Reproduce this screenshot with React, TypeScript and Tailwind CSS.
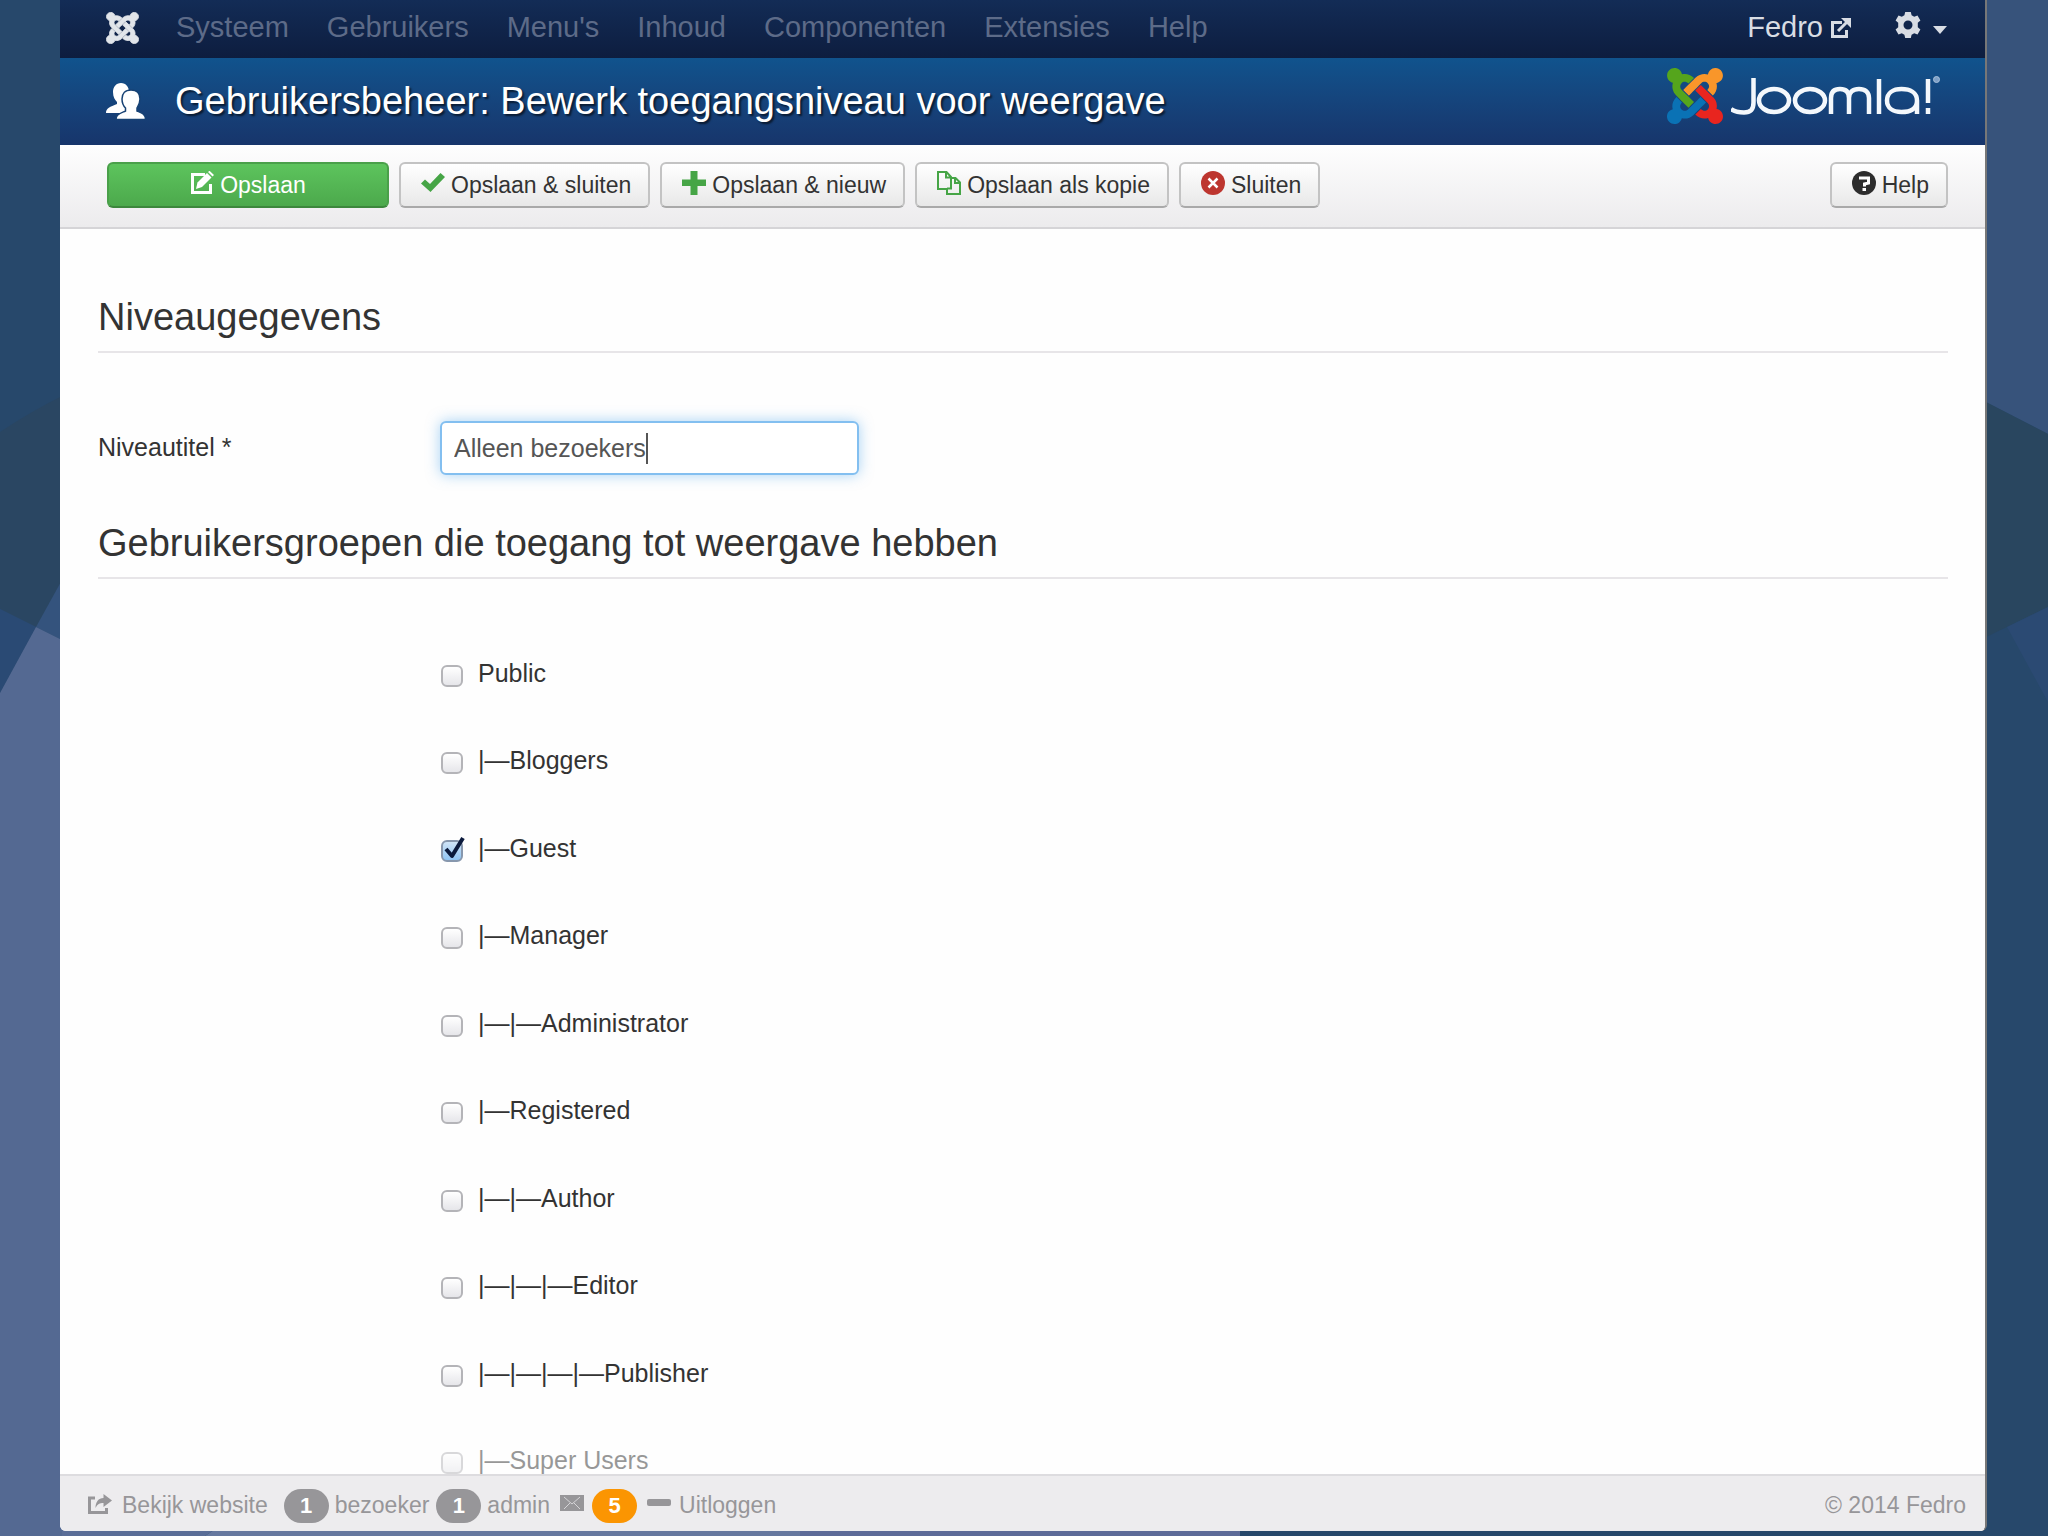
import { useId, useState } from 'react';
import type { ReactNode, SVGProps } from 'react';

type IconProps = SVGProps<SVGSVGElement>;

const knotArms = [
  'M.6 92.100C.6 58.800 27.400 32 60.400 32c30 0 54.500 21.900 59.200 50.200 32.600-7.600 67.100.6 96.500 30l-44.300 44.300c-20.500-20.500-42.600-16.300-55.400-3.500-14.300 14.300-14.300 37.900 0 52.200l99.500 99.500-44 44.300c-87.700-87.200-49.700-49.700-99.800-99.700-26.800-26.500-35-64.800-24.800-98.900C20.400 144.600.6 120.700.6 92.100z',
  'M130.100 208.500l44.300 44.300c10-10 89.700-89.700 99.700-99.800 14.300-14.300 37.600-14.300 51.900 0 12.800 12.800 17 35-3.500 55.400l44 44.300c31.200-31.200 38.500-67.600 28.900-101.200 29.200-4.100 51.900-29.200 51.900-59.500 0-33.200-26.800-60.100-59.800-60.100-30.300 0-55.400 22.500-59.500 51.600-33.800-9.900-71.700-1.500-98.300 25.100-18.300 19.100-71.100 71.500-99.600 99.900z',
  'M396.400 360.700c8.200-32.700-.9-68.500-26.300-93.900-11.800-12.200 5 4.700-99.500-99.700l-44.300 44.300 99.700 99.700c14.300 14.300 14.300 37.600 0 51.900-12.800 12.800-35 17-55.400-3.500l-44 44.300c27.600 30.200 68 38.800 102.700 28 5.500 27.400 29.700 48.100 58.900 48.100 33 0 59.800-26.800 59.800-60.100 0-30.200-22.500-55-51.600-59.100z',
  'M312.100 307.600l-44-44.300c-87 86.400-50.400 50.400-99.700 99.800-14.300 14.300-37.600 14.300-51.900 0-13.100-13.400-16.900-35.300 3.200-55.400l-44-44.300c-30.200 30.200-38 65.200-29.500 98.300-26.700 6-46.200 29.900-46.200 58.200C0 453.200 26.800 480 59.800 480c28.600 0 52.500-19.800 58.600-46.700 32.700 8.200 68.500-.6 94.200-26 32.100-32 12.200-12.400 99.500-99.700z',
];

function JoomlaMark(props: IconProps) {
  const colors = ['#55a51c', '#f9962a', '#e8251f', '#0a72b5'];
  return (
    <svg viewBox="0 32 448 448" preserveAspectRatio="none" aria-hidden="true" {...props}>
      {[3, 2, 1, 0].map((arm) => (
        <path key={arm} d={knotArms[arm]} fill={colors[arm]} />
      ))}
    </svg>
  );
}

function JoomlaGlyph(props: IconProps) {
  return (
    <svg viewBox="-6 26 460 460" preserveAspectRatio="none" fill="#e1e5ea" aria-hidden="true" {...props}>
      {knotArms.map((arm) => (
        <path key={arm} d={arm} stroke="#e1e5ea" strokeWidth="12" />
      ))}
    </svg>
  );
}

function UsersIcon(props: IconProps) {
  return (
    <svg viewBox="0 0 40 38" fill="#fff" aria-hidden="true" {...props}>
      <path d="M15 1c5 0 8 4 8 9 0 5-2 8-3 10v3l4 2v6H0c0-5 4-6 11-9v-2C9 18 7 15 7 10c0-5 3-9 8-9z" />
      <path
        stroke="#174274"
        strokeWidth="1.500"
        d="M25 8c6 0 9 4 9 9 0 4-2 7-3 9v3c5 2 8.500 3 8.500 8.500H10c0-5 4-6 9.500-8.500v-3c-2-2-3.500-5-3.500-9 0-5 3-9 9-9z"
      />
    </svg>
  );
}

function ExternalIcon(props: IconProps) {
  return (
    <svg viewBox="0 0 20 20" fill="none" stroke="currentColor" strokeWidth="3" aria-hidden="true" {...props}>
      <path d="M11 4.500H1.500v14h14V12M7 13L16 4" />
      <path d="M10 0H20v10z" fill="currentColor" stroke="none" />
    </svg>
  );
}

function GearIcon(props: IconProps) {
  return (
    <svg viewBox="0 0 26 26" fill="currentColor" aria-hidden="true" {...props}>
      <path
        fillRule="evenodd"
        d="M10.200 0h5.600l.8 3.300 2.600 1.500 3.300-1.300 2.900 5-2.600 2.300v4.400l2.600 2.300-2.900 5-3.300-1.300-2.600 1.500-.8 3.300h-5.600l-.8-3.300-2.600-1.500-3.300 1.300-2.900-5 2.600-2.300v-4.400L.6 8.500l2.900-5 3.300 1.300 2.600-1.500zM13 8.500a4.500 4.500 0 1 0 0 9 4.500 4.500 0 0 0 0-9z"
      />
    </svg>
  );
}

function EditIcon(props: IconProps) {
  return (
    <svg viewBox="0 0 24 24" fill="none" stroke="currentColor" aria-hidden="true" {...props}>
      <path d="M15 3.500H2.500v18h18V13" strokeWidth="3" />
      <path d="M6 18l1.500-6.500L17 2l4.500 4.500-9.500 9.500z" fill="currentColor" stroke="none" />
      <path d="M18 1l1.500-1.200L24 4l-1.500 1.500z" fill="currentColor" stroke="none" />
    </svg>
  );
}

function CheckIcon(props: IconProps) {
  return (
    <svg viewBox="0 0 24 20" fill="#46a546" aria-hidden="true" {...props}>
      <path d="M0 10.500L4 6.500l5 4.500L19.500 0 24 4 9.500 19z" />
    </svg>
  );
}

function PlusIcon(props: IconProps) {
  return (
    <svg viewBox="0 0 24 24" fill="#46a546" aria-hidden="true" {...props}>
      <path d="M8.500 0h7v8.500H24v6.500h-8.500V24h-7v-9H0V8.500h8.500z" />
    </svg>
  );
}

function CopyIcon(props: IconProps) {
  return (
    <svg viewBox="0 0 24 24" fill="none" stroke="#46a546" strokeWidth="2" aria-hidden="true" {...props}>
      <path d="M10 18H1V1h8.500L14 6v2M9 1v5.500h5" />
      <path d="M10 18v5h13V11.500L18.500 7H14v10.500h-4M18 7v5h5" />
    </svg>
  );
}

function CloseIcon(props: IconProps) {
  return (
    <svg viewBox="0 0 24 24" aria-hidden="true" {...props}>
      <circle cx="12" cy="12" r="12" fill="#bd362f" />
      <path d="M7.500 7.500l9 9M16.500 7.500l-9 9" stroke="#fff" strokeWidth="2.500" />
    </svg>
  );
}

function HelpIcon(props: IconProps) {
  return (
    <svg viewBox="0 0 24 24" aria-hidden="true" {...props}>
      <circle cx="12" cy="12" r="12" fill="#2d2d2d" />
      <path d="M7 7h9.500v5l-4 1v2.500" fill="none" stroke="#fff" strokeWidth="3" />
      <path d="M10.500 17h3.500v3h-3.500z" fill="#fff" />
    </svg>
  );
}

function ShareIcon(props: IconProps) {
  return (
    <svg viewBox="0 0 24 20" fill="none" stroke="currentColor" aria-hidden="true" {...props}>
      <path d="M7 4H1.500v14.500h17V14" strokeWidth="3" />
      <path d="M15.500 0L24 6.500l-8.500 6.500V9c-4 0-6 1-8 5 0-6 3-10 8-10z" fill="currentColor" stroke="none" />
    </svg>
  );
}

function MailIcon(props: IconProps) {
  return (
    <svg viewBox="0 0 24 16" aria-hidden="true" {...props}>
      <rect width="24" height="16" fill="#979699" />
      <path d="M4 2l8 7 8-7M4 14l6-6M20 14l-6-6" fill="none" stroke="#d5d4d7" />
    </svg>
  );
}

/** Desktop wallpaper behind the browser window. */
function Wallpaper() {
  return (
    <svg
      viewBox="0 0 2048 1536"
      preserveAspectRatio="none"
      className="absolute inset-0 h-full w-full"
      aria-hidden="true"
    >
      <rect width="2048" height="1536" fill="#27486b" />
      <path d="M0 432Q30 412 62 396V600L36 627L0 609z" fill="#2a4662" />
      <path d="M0 609L36 627L0 693z" fill="#2a4a74" />
      <path d="M62 580L36 627L62 640z" fill="#34537d" />
      <path d="M0 693L36 627L62 640V1536H0z" fill="#546992" />
      <path d="M62 1526H220L205 1536H62z" fill="#5a6d97" />
      <path d="M220 1526H800V1536H205z" fill="#66789f" />
      <path d="M800 1526H1240V1536H800z" fill="#5d6a98" />
      <path d="M1980 0H2048V434L1980 399z" fill="#37537b" />
      <path d="M1980 399L2048 434V607L1980 640z" fill="#29465f" />
      <path d="M2007 627L2048 607V702z" fill="#2b4a73" />
    </svg>
  );
}

const menu = ['Systeem', 'Gebruikers', "Menu's", 'Inhoud', 'Componenten', 'Extensies', 'Help'];

const groups = [
  { name: 'Public', depth: 0 },
  { name: 'Bloggers', depth: 1 },
  { name: 'Guest', depth: 1 },
  { name: 'Manager', depth: 1 },
  { name: 'Administrator', depth: 2 },
  { name: 'Registered', depth: 1 },
  { name: 'Author', depth: 2 },
  { name: 'Editor', depth: 3 },
  { name: 'Publisher', depth: 4 },
  { name: 'Super Users', depth: 1, faded: true },
];

function ToolButton({ icon, children }: { icon: ReactNode; children: ReactNode }) {
  return (
    <button
      type="button"
      className="flex h-[46px] items-center gap-1.5 rounded-md border-2 border-[#c3c3c3] border-b-[#a9a9a9] bg-linear-to-b from-white to-[#e8e8e8] pr-[17px] pl-5 text-[23px] text-[#333]"
    >
      {icon}
      {children}
    </button>
  );
}

function GroupRow({ name, depth, faded }: { name: string; depth: number; faded?: boolean }) {
  const id = useId();
  const [checked, setChecked] = useState(name === 'Guest');
  return (
    <li className={faded ? 'flex h-7 items-center opacity-50' : 'flex h-7 items-center'}>
      <span className="relative mt-1.5 h-[22px] w-[22px]">
        <input
          id={id}
          type="checkbox"
          checked={checked}
          onChange={(event) => setChecked(event.target.checked)}
          className="block h-[22px] w-[22px] appearance-none rounded-md border-2 border-[#b4b4b8] bg-linear-to-b from-white to-[#e6e6ea] checked:border-[#8797ad] checked:from-[#cfe4f7] checked:to-[#8fc4f3]"
        />
        {checked && (
          <svg
            viewBox="0 0 24 26"
            className="pointer-events-none absolute -top-1 left-0.5 h-[26px] w-6"
            fill="none"
            stroke="#0b1a3c"
            strokeWidth="4"
            aria-hidden="true"
          >
            <path d="M3 13l6 7L20 2" strokeLinejoin="round" />
          </svg>
        )}
      </span>
      <label htmlFor={id} className="pl-[15px] text-[25px] leading-7">
        {'|—'.repeat(depth) + name}
      </label>
    </li>
  );
}

function SectionTitle({ children }: { children: ReactNode }) {
  return <h2 className="border-b-2 border-[#e7e5e8] pb-3 text-[38px] leading-[44px]">{children}</h2>;
}

function Badge({ tone, children }: { tone: 'gray' | 'orange'; children: ReactNode }) {
  return (
    <span
      className={
        tone === 'gray'
          ? 'flex h-[34px] w-[45px] items-center justify-center rounded-full bg-[#979699] text-[22px] font-bold text-white'
          : 'flex h-[34px] w-[45px] items-center justify-center rounded-full bg-[#fb9502] text-[22px] font-bold text-white'
      }
    >
      {children}
    </span>
  );
}

export default function App() {
  const titleId = useId();
  return (
    <div className="relative h-screen overflow-hidden pr-[61px] pb-[5px] pl-[60px] font-['Liberation_Sans',Arial,sans-serif] text-[#333]">
      <Wallpaper />
      <div className="relative flex h-full flex-col overflow-hidden rounded-b-md border-r-2 border-[#777] bg-[#fefefe]">
        <nav className="flex h-[58px] shrink-0 items-center bg-linear-to-b from-[#132c56] to-[#0d1d3f] pr-[38px] pb-0.5 pl-[46px] text-[29px] text-[#5d6b88]">
          <a href="#home" aria-label="Joomla" className="mr-[37px]">
            <JoomlaGlyph className="h-8 w-[33px]" />
          </a>
          <ul className="flex gap-[38px]">
            {menu.map((item) => (
              <li key={item}>
                <a href="#menu">{item}</a>
              </li>
            ))}
          </ul>
          <div className="ml-auto flex items-center text-[#d9dde4]">
            <a href="#site" className="flex items-center gap-2">
              Fedro
              <ExternalIcon className="h-5 w-5" />
            </a>
            <button type="button" aria-label="Instellingen" className="ml-11 flex items-center gap-3">
              <GearIcon className="mb-1.5 h-[26px] w-[26px]" />
              <svg viewBox="0 0 14 8" className="mt-1 h-2 w-3.5" fill="currentColor" aria-hidden="true">
                <path d="M0 0h14L7 8z" />
              </svg>
            </button>
          </div>
        </nav>

        <header className="flex h-[87px] shrink-0 items-center bg-linear-to-b from-[#10538d] to-[#17356b] pr-11 pl-[46px]">
          <UsersIcon className="mr-[29px] mb-0.5 h-[38px] w-10" />
          <h1 className="text-[38px] text-white [text-shadow:2px_2px_2px_rgba(0,0,0,0.600)]">
            Gebruikersbeheer: Bewerk toegangsniveau voor weergave
          </h1>
          <div className="mb-3 ml-auto flex items-center gap-2">
            <JoomlaMark className="h-14 w-14" />
            <svg
              viewBox="0 0 210 40"
              className="h-10 w-[210px]"
              fill="none"
              stroke="#f4f8fc"
              strokeWidth="4.500"
              role="img"
              aria-label="Joomla!"
            >
              <path d="M0 33c4 3 9 3.500 13 3.500 7 0 9.500-3 9.500-10V2" />
              <ellipse cx="43" cy="24.500" rx="15" ry="11.500" />
              <ellipse cx="79" cy="24.500" rx="15" ry="11.500" />
              <path d="M100 38V22c0-6 3-9 9-9s9 3 9 9v16M118 22c0-6 4-9 10-9s10 3 10 9v16" />
              <path d="M148 3v35" />
              <path d="M186 38V24.500c0-8-7-11.500-15.500-11.500S156 17 156 24.500 162 36 170.500 36 186 33 186 25" />
              <path d="M197 3v24M197 32v6" />
              <circle cx="205.500" cy="3.500" r="3" stroke="#a9c0da" strokeWidth="1" fill="#7fa0c6" />
            </svg>
          </div>
        </header>

        <div className="flex h-[84px] shrink-0 gap-2.5 border-b-2 border-[#d5d4d7] bg-linear-to-b from-[#fefefe] to-[#ecebed] pt-[17px] pr-[37px] pl-[47px]">
          <button
            type="button"
            className="flex h-[46px] w-[282px] items-center justify-center gap-1.5 rounded-md border-2 border-[#4aa04a] border-b-[#3c873c] bg-linear-to-b from-[#5dc45d] to-[#4ca94c] text-[23px] text-white"
          >
            <EditIcon className="mb-1 h-6 w-6" />
            Opslaan
          </button>
          <ToolButton icon={<CheckIcon className="mb-1 h-5 w-6" />}>Opslaan &amp; sluiten</ToolButton>
          <ToolButton icon={<PlusIcon className="mb-1 h-6 w-6" />}>Opslaan &amp; nieuw</ToolButton>
          <ToolButton icon={<CopyIcon className="mb-1 h-6 w-6" />}>Opslaan als kopie</ToolButton>
          <ToolButton icon={<CloseIcon className="mb-1 h-6 w-6" />}>Sluiten</ToolButton>
          <div className="ml-auto">
            <ToolButton icon={<HelpIcon className="mb-1 h-6 w-6" />}>Help</ToolButton>
          </div>
        </div>

        <main className="flex min-h-0 flex-1 flex-col pt-[66px] pr-[37px] pl-[38px]">
          <SectionTitle>Niveaugegevens</SectionTitle>
          <div className="mt-[68px] mb-[46px] flex items-center">
            <label htmlFor={titleId} className="w-[342px] text-[25px]">
              Niveautitel *
            </label>
            <div className="relative">
              <input
                id={titleId}
                type="text"
                defaultValue="Alleen bezoekers"
                className="block h-[54px] w-[419px] rounded-md border-2 border-[#83bff0] bg-white px-3 text-[25px] text-[#555] shadow-[0_0_14px_rgba(82,168,236,0.500)] outline-none"
              />
              <span className="absolute top-3 left-[206px] h-[31px] w-0.5 bg-[#555]" />
            </div>
          </div>
          <SectionTitle>Gebruikersgroepen die toegang tot weergave hebben</SectionTitle>
          <ul className="flex flex-1 flex-col justify-between pt-20 pl-[343px]">
            {groups.map((group) => (
              <GroupRow key={group.name} {...group} />
            ))}
          </ul>
        </main>

        <footer className="flex h-[57px] shrink-0 items-center border-t-2 border-[#dddcdf] bg-[#edecee] px-[19px] pt-1 pl-7 text-[23px] text-[#979699]">
          <a href="#view" className="mr-4 flex items-center gap-2.5">
            <ShareIcon className="mb-1 h-5 w-6" />
            Bekijk website
          </a>
          <Badge tone="gray">1</Badge>
          <span className="mr-[7px] ml-1.5">bezoeker</span>
          <Badge tone="gray">1</Badge>
          <span className="mr-2.5 ml-1.5">admin</span>
          <MailIcon className="mr-2 mb-1.5 h-4 w-6" />
          <Badge tone="orange">5</Badge>
          <a href="#logout" className="ml-2.5 flex items-center gap-2">
            <span className="mb-1.5 h-[7px] w-6 rounded-xs bg-[#979699]" />
            Uitloggen
          </a>
          <span className="ml-auto">© 2014 Fedro</span>
        </footer>
      </div>
    </div>
  );
}
